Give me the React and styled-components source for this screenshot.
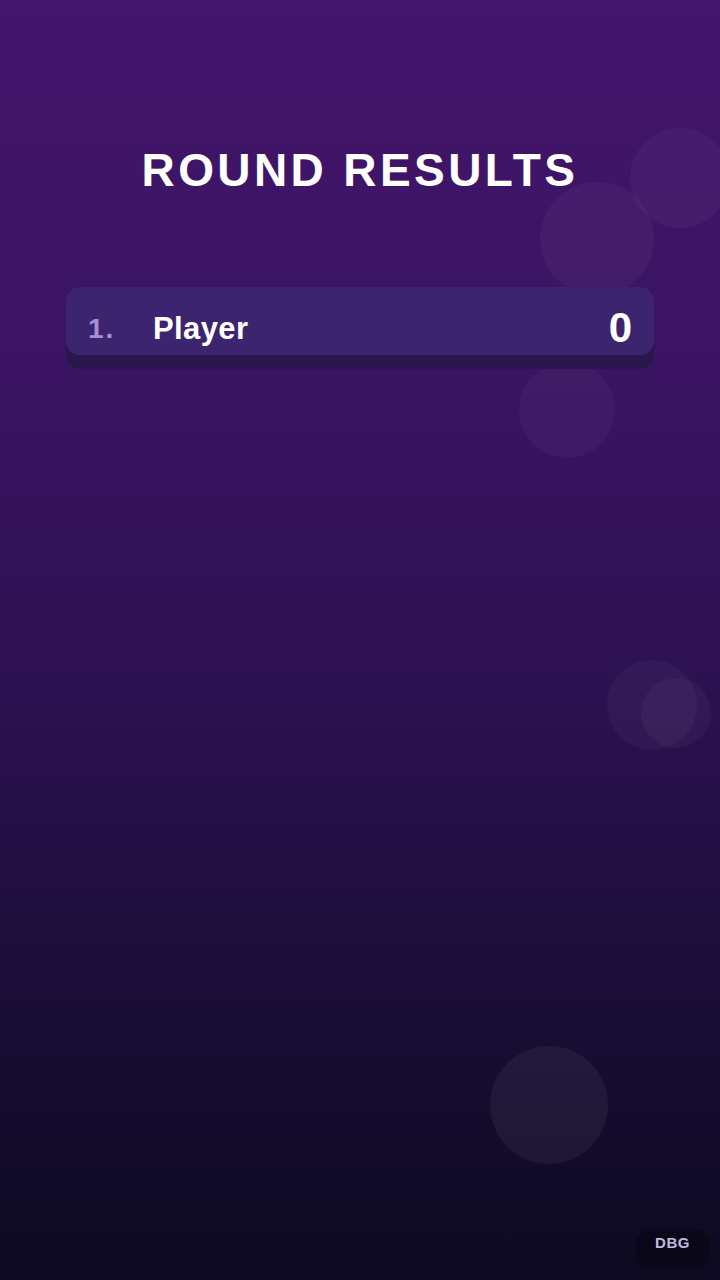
import React from "react";
import styled, { createGlobalStyle } from "styled-components";

const GlobalStyle = createGlobalStyle`
  html, body {
    margin: 0;
    padding: 0;
  }
  body {
    font-family: "Liberation Sans", Arial, sans-serif;
    background: #0d0a22;
  }
`;

const Screen = styled.div`
  position: relative;
  width: 720px;
  height: 1280px;
  overflow: hidden;
  background: linear-gradient(180deg, #43156b 0%, #3a1462 30%, #2c1150 55%, #1c0e3a 75%, #0c0a20 100%);
  display: flex;
  flex-direction: column;
  align-items: center;
`;

const Bubble = styled.div`
  position: absolute;
  left: ${(p) => p.x - p.r}px;
  top: ${(p) => p.y - p.r}px;
  width: ${(p) => p.r * 2}px;
  height: ${(p) => p.r * 2}px;
  border-radius: 50%;
  background: rgba(255, 255, 255, ${(p) => p.a});
  pointer-events: none;
`;

const Content = styled.main`
  position: relative;
  width: 588px;
  display: flex;
  flex-direction: column;
  align-items: stretch;
`;

const Title = styled.h1`
  margin: 146px 0 0;
  text-align: center;
  color: #ffffff;
  font-size: 46px;
  font-weight: 700;
  letter-spacing: 3.4px;
  line-height: 48px;
`;

const Scores = styled.ol`
  list-style: none;
  margin: 93px 0 0;
  padding: 0;
  display: flex;
  flex-direction: column;
  gap: 20px;
`;

const Row = styled.li`
  height: 82px;
  display: flex;
  align-items: center;
  padding: 0 22px;
  border-radius: 14px;
  background: #3d246f;
  box-shadow: inset 0 -14px 0 #29174e;
`;

const Rank = styled.span`
  width: 65px;
  color: #a690d4;
  font-size: 28px;
  font-weight: 700;
  letter-spacing: 2px;
  padding-top: 2px;
`;

const Name = styled.span`
  flex: 1;
  color: #ffffff;
  font-size: 31px;
  font-weight: 700;
  letter-spacing: 0.4px;
  padding-top: 2px;
`;

const Points = styled.span`
  color: #ffffff;
  font-size: 42px;
  font-weight: 700;
`;

const DebugBadge = styled.button`
  position: absolute;
  right: 11px;
  bottom: 12px;
  width: 73px;
  height: 39px;
  border: none;
  border-radius: 14px;
  background: #0a0719;
  color: #c3bbdf;
  font-family: "Liberation Sans", Arial, sans-serif;
  font-size: 15px;
  font-weight: 700;
  letter-spacing: 0.5px;
  line-height: 1;
  padding: 0 0 12px;
`;

const bubbles = [
  { x: 680, y: 178, r: 50, a: 0.035 },
  { x: 597, y: 239, r: 57, a: 0.035 },
  { x: 567, y: 410, r: 48, a: 0.03 },
  { x: 652, y: 705, r: 45, a: 0.035 },
  { x: 676, y: 713, r: 35, a: 0.035 },
  { x: 549, y: 1105, r: 59, a: 0.05 },
];

const players = [{ name: "Player", score: 0 }];

export default function App() {
  return (
    <>
      <GlobalStyle />
      <Screen>
        {bubbles.map((b, i) => (
          <Bubble key={i} {...b} />
        ))}
        <Content>
          <Title>ROUND RESULTS</Title>
          <Scores>
            {players.map((p, i) => (
              <Row key={p.name}>
                <Rank>{i + 1}.</Rank>
                <Name>{p.name}</Name>
                <Points>{p.score}</Points>
              </Row>
            ))}
          </Scores>
        </Content>
        <DebugBadge>DBG</DebugBadge>
      </Screen>
    </>
  );
}
